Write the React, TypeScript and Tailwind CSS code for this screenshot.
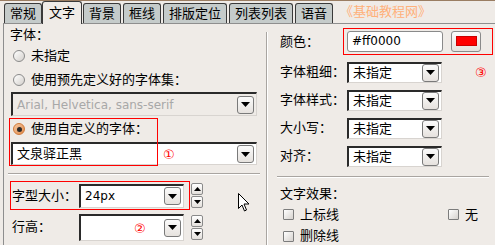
import React from 'react';

const font = { fontFamily: '"DejaVu Sans", "Noto Sans CJK SC", sans-serif' };

function DropBtn() {
  return (
    <div className="w-[17px] h-[18px] shrink-0 rounded-[3px] border border-[#7a7a7a] bg-gradient-to-b from-[#fbfbfb] to-[#e6e2de] flex items-center justify-center">
      <svg width="9" height="5" viewBox="0 0 9 5">
        <path d="M0 0h9L4.5 5z" fill="#000" />
      </svg>
    </div>
  );
}

function Select({ text, w, h, disabled, latin }: { text: string; w: number; h: number; disabled?: boolean; latin?: boolean }) {
  return (
    <div
      className={`flex items-center justify-between border-t-2 border-l-2 border-t-[#2a2a2a] border-l-[#2a2a2a] border-r border-b border-r-[#d8d4d0] border-b-[#d8d4d0] pr-[2px] ${disabled ? 'bg-[#efebe7]' : 'bg-white'}`}
      style={{ width: w, height: h }}
    >
      <span className={`pl-[4px] ${disabled ? 'text-[#a8a8a8]' : 'text-black'} ${latin ? 'text-[12px]' : ''}`}>{text}</span>
      <DropBtn />
    </div>
  );
}

function Radio({ checked }: { checked?: boolean }) {
  return (
    <div
      className={`w-[12px] h-[12px] rounded-full border flex items-center justify-center shrink-0 ${checked ? 'border-[#d07a3a] bg-gradient-to-br from-[#f6c8a0] to-[#e08a48]' : 'border-[#8a8a8a] bg-gradient-to-br from-white to-[#d4d0cc]'}`}
    >
      {checked && <div className="w-[5px] h-[5px] rounded-full bg-[#2a2a2a]" />}
    </div>
  );
}

function Checkbox() {
  return <div className="w-[11px] h-[11px] border border-[#7c7c7c] rounded-[1px] bg-gradient-to-br from-white to-[#d6d2ce] shrink-0" />;
}

function Spinner() {
  return (
    <div className="flex flex-col w-[12px] ml-[7px] gap-[1px]">
      {[0, 1].map((i) => (
        <div key={i} className="h-[12px] rounded-[2px] border border-[#8a8a8a] bg-gradient-to-b from-white to-[#e4e0dc] flex items-center justify-center">
          <svg width="7" height="4" viewBox="0 0 7 4">
            <path d={i === 0 ? 'M0 4h7L3.5 0z' : 'M0 0h7L3.5 4z'} fill="#000" />
          </svg>
        </div>
      ))}
    </div>
  );
}

const tabs = ['常规', '文字', '背景', '框线', '排版定位', '列表列表', '语音'];

export default function App() {
  return (
    <div className="w-[495px] h-[245px] overflow-hidden bg-[#efebe7] text-[13px] text-black border-t border-[#9a7d62] relative" style={font}>
      {/* tabs */}
      <div className="flex items-end h-[22px] pl-[4px] gap-[2px]">
        {tabs.map((t) =>
          t === '文字' ? (
            <div key={t} className="h-[23px] -mb-[1px] px-[6px] bg-[#efebe7] border border-b-0 border-[#3a3a3a] rounded-t-[3px] flex items-center relative z-10 -ml-[2px] -mr-[1px]">
              {t}
            </div>
          ) : (
            <div key={t} className="h-[20px] px-[5px] bg-[#c5cbca] border border-b-0 border-[#3a3a3a] rounded-t-[3px] flex items-center">
              {t}
            </div>
          )
        )}
        <span className="ml-[5px] self-center text-[#ffb07a]">《基础教程网》</span>
      </div>

      {/* panel */}
      <div className="ml-[3px] h-[223px] border-l border-t border-[#8e8e8e] flex">
        {/* left column */}
        <div className="w-[262px] pl-[6px] flex flex-col">
          <div className="h-[18px] mt-[2px] flex items-center">字体：</div>
          <div className="h-[22px] mt-[1px] flex items-center gap-[6px] pl-[3px]">
            <Radio />
            <span>未指定</span>
          </div>
          <div className="h-[22px] mt-[2px] flex items-center gap-[6px] pl-[3px]">
            <Radio />
            <span>使用预先定义好的字体集：</span>
          </div>
          <div className="mt-[1px] ml-[1px]">
            <Select text="Arial, Helvetica, sans-serif" w={246} h={24} disabled latin />
          </div>
          <div className="relative mt-[2px] h-[48px]">
            <div className="absolute left-[-1px] top-0 w-[149px] h-[48px] border border-[#ff0000] pointer-events-none z-10" />
            <div className="h-[22px] flex items-center gap-[6px] pl-[3px]">
              <Radio checked />
              <span>使用自定义的字体：</span>
            </div>
            <div className="mt-[2px] ml-[1px] relative">
              <Select text="文泉驿正黑" w={246} h={23} />
              <span className="absolute left-[152px] top-[3px] text-[#ff0000]">①</span>
            </div>
          </div>
          <div className="mt-[7px] -ml-[2px] mr-[6px] h-[2px] border-t border-[#a9a5a1] border-b border-b-white" />
          <div className="relative mt-[6px] h-[29px] flex items-center">
            <div className="absolute left-[0px] top-0 w-[180px] h-[29px] border border-[#ff0000] pointer-events-none z-10" />
            <span className="w-[69px] pl-[2px]">字型大小：</span>
            <Select text="24px" w={105} h={24} latin />
            <Spinner />
          </div>
          <div className="mt-[3px] flex items-center h-[28px]">
            <span className="w-[69px] pl-[2px]">行高：</span>
            <div className="relative">
              <Select text="" w={105} h={27} />
              <span className="absolute left-[55px] top-[5px] text-[#ff0000]">②</span>
            </div>
            <Spinner />
          </div>
        </div>

        {/* divider */}
        <div className="mt-[8px] w-[2px] border-l border-[#a9a5a1] border-r border-r-white" />

        {/* right column */}
        <div className="flex-1 pl-[12px] flex flex-col">
          <div className="relative mt-[4px] h-[27px] flex items-center">
            <div className="absolute left-[63px] top-0 w-[150px] h-[27px] border border-[#ff0000] pointer-events-none" />
            <span className="w-[67px]">颜色：</span>
            <div className="w-[96px] h-[21px] rounded-[3px] border border-[#8a8a8a] bg-white flex items-center pl-[4px] text-[12px]">#ff0000</div>
            <div className="ml-[8px] w-[30px] h-[21px] rounded-[3px] border border-[#8a8a8a] bg-gradient-to-b from-[#fbfbfb] to-[#e6e2de] flex items-center justify-center">
              <div className="w-[21px] h-[10px] bg-[#ff0000] border border-[#7a0000]/40" />
            </div>
          </div>
          {['字体粗细：', '字体样式：', '大小写：', '对齐：'].map((l, i) => (
            <div key={l} className="h-[21px] mt-[7px] flex items-center relative">
              <span className="w-[67px]">{l}</span>
              <Select text="未指定" w={95} h={21} />
              {i === 0 && <span className="absolute left-[195px] top-[1px] text-[#ff0000]">③</span>}
            </div>
          ))}
          <div className="mt-[9px] -ml-[3px] mr-[6px] h-[2px] border-t border-[#a9a5a1] border-b border-b-white" />
          <div className="mt-[7px] h-[18px] flex items-center">文字效果：</div>
          <div className="mt-[2px] h-[20px] flex items-center">
            <div className="flex items-center gap-[6px] pl-[3px] w-[168px]">
              <Checkbox />
              <span>上标线</span>
            </div>
            <div className="flex items-center gap-[6px]">
              <Checkbox />
              <span>无</span>
            </div>
          </div>
          <div className="mt-[2px] h-[20px] flex items-center gap-[6px] pl-[3px]">
            <Checkbox />
            <span>删除线</span>
          </div>
        </div>
      </div>

      {/* mouse cursor */}
      <svg className="absolute left-[238px] top-[192px]" width="13" height="20" viewBox="0 0 13 20">
        <path d="M0.5 0.5v15l3.5-3.5 2.5 6 2-1-2.5-6h5z" fill="#fff" stroke="#000" strokeWidth="1" />
      </svg>
    </div>
  );
}
